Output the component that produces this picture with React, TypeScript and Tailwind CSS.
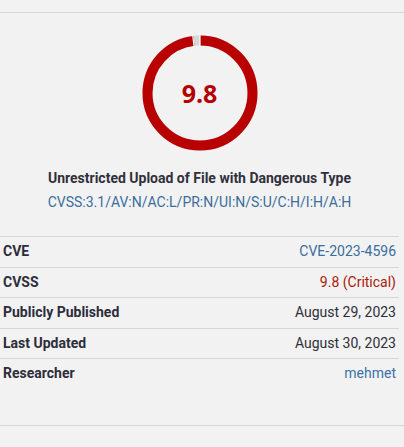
import React from 'react'

const rows = [
  { label: 'CVE', value: 'CVE-2023-4596', tone: 'text-[#3b6d9d]' },
  { label: 'CVSS', value: '9.8 (Critical)', tone: 'text-[#a8200c]' },
  { label: 'Publicly Published', value: 'August 29, 2023', tone: 'text-[#2f2f38]' },
  { label: 'Last Updated', value: 'August 30, 2023', tone: 'text-[#2f2f38]' },
  { label: 'Researcher', value: 'mehmet', tone: 'text-[#3b72a8]' },
]

function ScoreRing({ score }: { score: number }) {
  const r = 52.5
  const c = 2 * Math.PI * r
  const part = (score / 10) * c
  const gapAngle = (score / 10) * 360
  return (
    <div className="relative w-[116px] h-[116px]">
      <svg width="116" height="116" viewBox="0 0 116 116">
        <circle cx="58" cy="58" r={r} fill="none" stroke="#d5d8db" strokeWidth="10" />
        <circle
          cx="58"
          cy="58"
          r={r}
          fill="none"
          stroke="#b90000"
          strokeWidth="10"
          strokeDasharray={`${part} ${c}`}
          transform="rotate(-90 58 58)"
        />
        {/* segment borders */}
        <line x1="58" y1="0" x2="58" y2="12" stroke="#ffffff" strokeWidth="1.2" />
        <line
          x1="58"
          y1="0"
          x2="58"
          y2="12"
          stroke="#ffffff"
          strokeWidth="1.2"
          transform={`rotate(${gapAngle} 58 58)`}
        />
      </svg>
      <div className="absolute inset-0 flex items-center justify-center">
        <span className="font-['Open_Sans',sans-serif] font-bold text-[25px] text-[#b50000] leading-none">
          {score.toFixed(1)}
        </span>
      </div>
    </div>
  )
}

export default function App() {
  return (
    <div className="min-h-[447px] bg-[#f2f2f2] pt-[12px] font-['Roboto',sans-serif] text-[14px]">
      <div className="border-t border-[#d6d6d6] pr-[5px]">
        {/* score header */}
        <div className="flex flex-col items-center pt-[22px]">
          <ScoreRing score={9.8} />
          <h3 className="mt-[17px] font-bold text-[14px] leading-[20px] text-[#30303c]">
            Unrestricted Upload of File with Dangerous Type
          </h3>
          <p className="mt-[4px] leading-[20px] text-[#3b6d9d]">
            CVSS:3.1/AV:N/AC:L/PR:N/UI:N/S:U/C:H/I:H/A:H
          </p>
        </div>

        {/* details table */}
        <div className="mt-[24px]">
          {rows.map((row, i) => (
            <div
              key={row.label}
              className={`flex items-center justify-between h-[30.5px] pl-[3px] pr-[3px] border-t border-[#d6d6d6] ${i === rows.length - 1 ? '' : ''}`}
            >
              <span className="font-bold text-[#2d2d3a]">{row.label}</span>
              <span className={row.tone}>{row.value}</span>
            </div>
          ))}
        </div>
      </div>
      <div className="mt-[36px] border-t border-[#d6d6d6]" />
    </div>
  )
}
